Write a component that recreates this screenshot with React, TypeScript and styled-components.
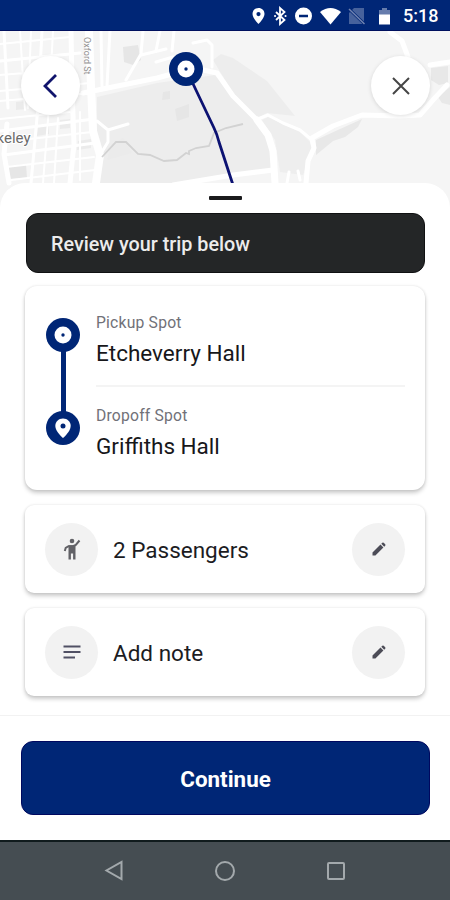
import React from "react";
import styled, { createGlobalStyle } from "styled-components";

const NAVY = "#002676";

const GlobalStyle = createGlobalStyle`
  * { box-sizing: border-box; }
  body { margin: 0; background: #fff; font-family: Roboto, sans-serif; }
  button { font: inherit; border: 0; padding: 0; }
  svg { display: block; }
`;

const Screen = styled.div`
  width: 450px;
  height: 900px;
  display: flex;
  flex-direction: column;
  overflow: hidden;
  background: #fff;
`;

const StatusBar = styled.header`
  height: 31px;
  flex: none;
  background: ${NAVY};
  border-bottom: 1px solid #00105e;
  display: flex;
  align-items: center;
  justify-content: flex-end;
  padding: 2px 13px 0 0;
  color: #fff;
`;

const Clock = styled.span`
  font-size: 18px;
  line-height: 28px;
  font-weight: 500;
  margin-left: 11px;
  width: 34px;
  white-space: nowrap;
`;

const MapArea = styled.div`
  position: relative;
  flex: none;
  height: 177px;
  background: #f5f5f5;
`;

const MapControls = styled.div`
  position: absolute;
  inset: 25px 20px auto 21px;
  display: flex;
  justify-content: space-between;
`;

const RoundButton = styled.button`
  width: 59px;
  height: 59px;
  border-radius: 50%;
  background: #fff;
  box-shadow: 0 1px 4px rgba(0, 0, 0, 0.13);
  display: grid;
  place-items: center;
`;

const Sheet = styled.main`
  position: relative;
  flex: 1;
  margin-top: -25px;
  background: #fff;
  border-radius: 25px 25px 0 0;
  display: flex;
  flex-direction: column;
`;

const Handle = styled.div`
  width: 33px;
  height: 4px;
  margin: 13px auto 0;
  background: #1a1a1c;
  border-radius: 1px;
`;

const Content = styled.div`
  display: flex;
  flex-direction: column;
  padding: 13px 25px 0;
`;

const Banner = styled.div`
  height: 60px;
  margin: 0 0 13px 1px;
  padding: 3px 0 0 24px;
  display: flex;
  align-items: center;
  background: #242627;
  border: 1px solid #101112;
  border-radius: 12px;
  color: #ececec;
  font-size: 19.8px;
  font-weight: 500;
`;

const Card = styled.section`
  background: #fff;
  border-radius: 12px;
  box-shadow: 0 3px 4px rgba(0, 0, 0, 0.2), 0 0 3px rgba(0, 0, 0, 0.11);
`;

const TripCard = styled(Card)`
  height: 204px;
  display: flex;
  padding: 32px 20px 0 21px;
  margin-bottom: 15px;
`;

const Rail = styled.div`
  width: 34px;
  display: flex;
  flex-direction: column;
  align-items: center;
`;

const RailLine = styled.div`
  width: 5px;
  height: 61px;
  margin: -1px 0;
  background: ${NAVY};
`;

const Stops = styled.div`
  flex: 1;
  margin-left: 16px;
  margin-top: -6px;
`;

const Stop = styled.div<{ $divided?: boolean }>`
  height: ${(p) => (p.$divided ? 75 : 80)}px;
  border-bottom: ${(p) => (p.$divided ? "2px solid #f4f4f4" : "0")};
  margin-bottom: ${(p) => (p.$divided ? 18 : 0)}px;
`;

const StopLabel = styled.div`
  color: #717178;
  font-size: 15.7px;
  line-height: 22px;
  letter-spacing: 0.2px;
`;

const StopName = styled.div`
  color: #17171a;
  font-size: 22.5px;
  line-height: 30px;
  margin-top: 4px;
`;

const OptionCard = styled(Card)`
  height: 88px;
  border-radius: 9px;
  display: flex;
  align-items: center;
  padding: 0 20px 0 20px;
  margin-bottom: 15px;
`;

const IconDisc = styled.span`
  width: 53px;
  height: 53px;
  flex: none;
  border-radius: 50%;
  background: #f2f2f2;
  display: grid;
  place-items: center;
`;

const OptionText = styled.span`
  flex: 1;
  margin: 1px 0 0 15px;
  color: #1c1c1f;
  font-size: 22.5px;
  line-height: 30px;
`;

const Footer = styled.footer`
  margin-top: 4px;
  border-top: 1px solid #f2f2f2;
  padding: 25px 20px 0 21px;
`;

const ContinueButton = styled.button`
  width: 100%;
  height: 74px;
  padding-top: 2px;
  background: ${NAVY};
  border: 1px solid #00085f;
  border-radius: 12px;
  color: #fff;
  font-size: 22.4px;
  font-weight: 700;
`;

const NavBar = styled.nav`
  height: 60px;
  flex: none;
  background: #454d52;
  border-top: 2px solid #101b1d;
  display: flex;
  justify-content: center;
  align-items: center;
  gap: 91px;
`;

const StatusIcons = () => (
  <svg width="144" height="24" viewBox="0 0 144 24" fill="#fff">
    <path fillRule="evenodd" d="M10.500 4c-3.500 0-6 2.500-6 6 0 4 6 10 6 10s6-6 6-10c0-3.500-2.500-6-6-6zm0 4a2.100 2.100 0 1 1 0 4.200 2.100 2.100 0 0 1 0-4.200z" />
    <path d="M28 8l8.500 8-4.500 4V4l4.500 4-8.500 8" fill="none" stroke="#fff" strokeWidth="1.800" />
    <path d="M27 12h.1M37.500 12h.1" stroke="#fff" strokeWidth="2" strokeLinecap="round" />
    <path fillRule="evenodd" d="M55.500 3.500a8.500 8.500 0 1 0 0 17 8.500 8.500 0 0 0 0-17zM51 10.700h9v2.600h-9z" />
    <path d="M72 8q10.500-8 21 0L82.500 20.500z" />
    <path d="M106 4h10v16h-15V9z" opacity=".28" />
    <path d="M101 5l15.500 15" stroke={NAVY} strokeWidth="3" />
    <path d="M101 5l15.500 15" stroke="#7184b1" strokeWidth="1.500" />
    <path d="M131 6h3V4h5v2h3v5h-11z" opacity=".4" />
    <path d="M131 10.500h11v10h-11z" />
  </svg>
);

const RouteMap = () => (
  <svg width="450" height="177" viewBox="0 31 450 177">
    <path d="M0 30h450v178H0z" fill="#f5f5f5" />
    <path d="M97 97l60-14 58-8 40 47 13 18 4 30-99 13H97z" fill="#ededed" />
    <path d="M262 120l6-3 32 15 10 10 2 8-9 25-23-3-5-32z" fill="#eeeeee" />
    <path d="M213 60l8-6 12 4 34 23 28 35-28-3-10 5-24-25z" fill="#ededed" />
    <path d="M316 140l46-21-4 8-13 10-12 4-17 14zM431 68l17-2v17l-9 2-8-5zM438 97l12-10v18l-8-2z" fill="#e8e8e8" />
    <path d="M123 47l15-2 3 15-8 5-9-3zM9 166l17-2 1 14-18 1zM175 109l14-5v13l-12 4zM163 92l7-1v8l-8 1z" fill="#e6e6e6" />
    <path d="M78 141l13-2v9l-14 2zM38 125l11-1v10l-12 2zM60 120l10-1v9l-10 1zM111 144l12-6 9 15-25 7zM16 102l10-1v8l-10 1z" fill="#ebebeb" />
    <g fill="none" stroke="#fff" strokeLinecap="round" strokeLinejoin="round">
      <path strokeWidth="2" d="M20 31l5 79M31 31l-3 77M53 31l-4 76-6 76M0 44l70-7M0 75l25-2M0 91l90-8M0 101l92-8M0 119l70-7M12 141l80-9M6 167l88-10M11 180l84-10M58 118l-4 65M80 112v68" />
      <path strokeWidth="3" d="M4 31l4 77M42 31l-4 76-7 76M0 61l80-8M0 131l94-12M4 155l91-12M110 31l-3 55M101 31l1 56M143 31l-2 23-15 26M160 31l-4 20M174 31l-2 20" />
      <path strokeWidth="5" d="M7 124l-3 30 5 29M71 31l1 55 2 58-4 39" />
      <path strokeWidth="8" d="M89 31l2 55 2 45 7 24-4 28" />
      <path strokeWidth="5" d="M83 93l74-15 30-8 16 0 14 3 16 23 24 24M312 138l21-12 29-11 38 1 20-1 13-15 14-15M312 139l2 9-6 13-2 22M173 185l60-10 40-5M390 32l12 9 6 16M430 65l20-3" />
      <path strokeWidth="7" d="M257 120l11 15 5 16 2 32" />
      <path strokeWidth="3" d="M258 119l10-4 15 8 17 7 12 10M97 121l11 9 20-6M108 130v12l-8 13M141 55l25-6M156 62l17-5M193 43l14-3 5 5v22M289 172l-2 11M298 171l2 9" />
    </g>
    <path d="M102 157l14-15h10l12 12 12 1 14 6 13-1 9-7 3 1v-3l7-3 13-2 5-13 12-5 17-4" fill="none" stroke="#d2d2d2" strokeWidth="1.800" />
    <text x="-3.500" y="143" fontSize="15" fill="#6b6b6b" stroke="#fff" strokeWidth="2" paintOrder="stroke">keley</text>
    <text transform="translate(83.500 37) rotate(90)" fontSize="9" fill="#909090">Oxford St</text>
    <path d="M186 69l28 59q3 6 5 14l14 43" fill="none" stroke="#0c1272" strokeWidth="2.800" />
    <circle cx="186" cy="69" r="17" fill={NAVY} />
    <circle cx="186" cy="69" r="8.500" fill="#fff" />
    <circle cx="186" cy="69" r="1.700" fill={NAVY} />
  </svg>
);

const StopMarker = ({ pin = false }: { pin?: boolean }) => (
  <svg width="34" height="34" viewBox="0 0 34 34">
    <circle cx="17" cy="17" r="17" fill={NAVY} />
    {pin ? (
      <>
        <path d="M17 7.500c-4.500 0-7.700 3.300-7.700 7.500 0 5.500 7.700 12 7.700 12s7.700-6.500 7.700-12c0-4.200-3.200-7.500-7.700-7.500z" fill="#fff" />
        <circle cx="17" cy="15" r="2.500" fill={NAVY} />
      </>
    ) : (
      <>
        <circle cx="17" cy="17" r="8.500" fill="#fff" />
        <circle cx="17" cy="17" r="1.700" fill={NAVY} />
      </>
    )}
  </svg>
);

const PersonIcon = () => (
  <svg width="22" height="24" viewBox="0 0 22 24" fill="none" stroke="#626267">
    <circle cx="11" cy="4" r="2.300" fill="#626267" stroke="none" />
    <path d="M18.500 3.500l-3.700 4.500-2.800 1.200H7.500L4.700 10.800 3.800 14" strokeWidth="2" />
    <path d="M7.500 8.200h7V22.500h-2.400v-6H9.900v6H7.500z" fill="#626267" stroke="none" />
  </svg>
);

const NoteIcon = () => (
  <svg width="18" height="14" viewBox="0 0 18 14" stroke="#505064" strokeWidth="2">
    <path d="M.5 1.500h17M.5 7h17M.5 12.500h11.500" />
  </svg>
);

const PencilIcon = () => (
  <svg width="14" height="14" viewBox="0 0 14 14" fill="#4c4c57">
    <path d="M.5 10.500L8.500 2.600l2.900 2.900-8 8H.5zM9.300 1.800l1-1q.7-.6 1.400 0l1.500 1.500q.6.700 0 1.400l-1 1z" />
  </svg>
);

const options = [
  { label: "2 Passengers", Icon: PersonIcon },
  { label: "Add note", Icon: NoteIcon },
];

export default function App() {
  return (
    <>
      <GlobalStyle />
      <Screen>
        <StatusBar>
          <StatusIcons />
          <Clock>5:18</Clock>
        </StatusBar>
        <MapArea>
          <RouteMap />
          <MapControls>
            <RoundButton aria-label="Back">
              <svg width="18" height="26" viewBox="0 0 18 26" fill="none" stroke="#10146c" strokeWidth="2.800">
                <path d="M14 2L3 13l11 11" />
              </svg>
            </RoundButton>
            <RoundButton aria-label="Close">
              <svg width="18" height="18" viewBox="0 0 18 18" fill="none" stroke="#454545" strokeWidth="2">
                <path d="M1 1l16 16M17 1L1 17" />
              </svg>
            </RoundButton>
          </MapControls>
        </MapArea>
        <Sheet>
          <Handle />
          <Content>
            <Banner>Review your trip below</Banner>
            <TripCard>
              <Rail>
                <StopMarker />
                <RailLine />
                <StopMarker pin />
              </Rail>
              <Stops>
                <Stop $divided>
                  <StopLabel>Pickup Spot</StopLabel>
                  <StopName>Etcheverry Hall</StopName>
                </Stop>
                <Stop>
                  <StopLabel>Dropoff Spot</StopLabel>
                  <StopName>Griffiths Hall</StopName>
                </Stop>
              </Stops>
            </TripCard>
            {options.map(({ label, Icon }) => (
              <OptionCard key={label}>
                <IconDisc><Icon /></IconDisc>
                <OptionText>{label}</OptionText>
                <IconDisc><PencilIcon /></IconDisc>
              </OptionCard>
            ))}
          </Content>
          <Footer>
            <ContinueButton>Continue</ContinueButton>
          </Footer>
        </Sheet>
        <NavBar>
          <svg width="20" height="22" viewBox="0 0 20 22" fill="none" stroke="#a3a9ac" strokeWidth="2">
            <path d="M17.500 2v17L2.500 10.500z" />
          </svg>
          <svg width="20" height="20" viewBox="0 0 20 20" fill="none" stroke="#a3a9ac" strokeWidth="2">
            <circle cx="10" cy="10" r="9" />
          </svg>
          <svg width="20" height="20" viewBox="0 0 20 20" fill="none" stroke="#a3a9ac" strokeWidth="2">
            <rect x="2" y="2" width="16" height="16" rx="1" />
          </svg>
        </NavBar>
      </Screen>
    </>
  );
}
